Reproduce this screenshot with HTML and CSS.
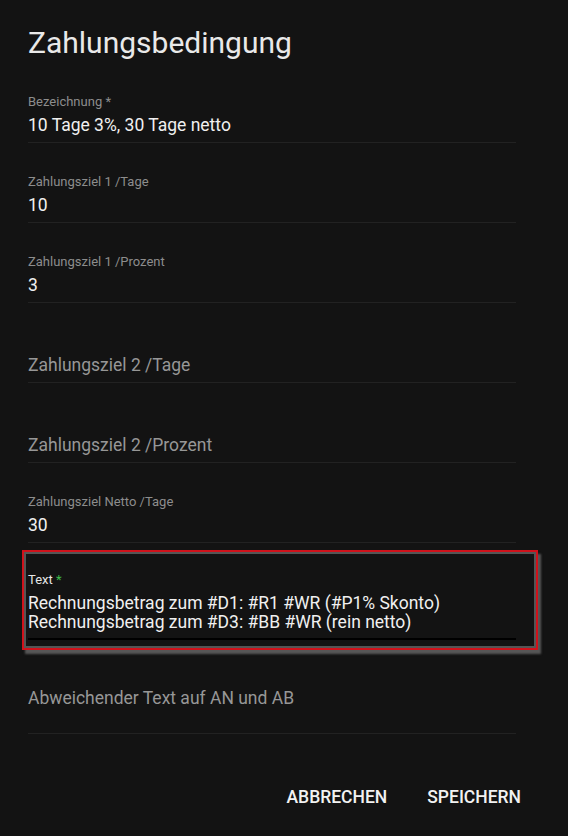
FILE: index.html
```html
<!DOCTYPE html>
<html lang="de">

<head>
    <title>Zahlungsbedingung</title>
    <meta name="viewport" content="width=device-width, initial-scale=1" />
    <meta charset="utf-8" />
    <link rel="stylesheet" href="styles.css">
</head>

<body>
    <div class="dialog">
        <h2 class="dialog-title">Zahlungsbedingung</h2>

        <form class="dialog-content">
            <div class="field">
                <label class="field-label">Bezeichnung *</label>
                <div class="field-input">10 Tage 3%, 30 Tage netto</div>
            </div>
            <div class="field">
                <label class="field-label">Zahlungsziel 1 /Tage</label>
                <div class="field-input">10</div>
            </div>
            <div class="field">
                <label class="field-label">Zahlungsziel 1 /Prozent</label>
                <div class="field-input">3</div>
            </div>
            <div class="field">
                <label class="field-label"></label>
                <div class="field-input placeholder">Zahlungsziel 2 /Tage</div>
            </div>
            <div class="field">
                <label class="field-label"></label>
                <div class="field-input placeholder">Zahlungsziel 2 /Prozent</div>
            </div>
            <div class="field">
                <label class="field-label">Zahlungsziel Netto /Tage</label>
                <div class="field-input">30</div>
            </div>
            <div class="field field-hover marked">
                <label class="field-label label-active">Text <span class="required">*</span></label>
                <div class="field-input multiline">Rechnungsbetrag zum #D1: #R1 #WR (#P1% Skonto)<br />Rechnungsbetrag zum #D3: #BB #WR (rein netto)</div>
            </div>
            <div class="field field-last">
                <label class="field-label"></label>
                <div class="field-input placeholder multiline rows-2">Abweichender Text auf AN und AB</div>
            </div>
        </form>

        <div class="dialog-actions">
            <button class="btn" type="button">Abbrechen</button>
            <button class="btn" type="button">Speichern</button>
        </div>
    </div>
</body>

</html>
```

FILE: styles.css
```css
html,
body {
    margin: 0;
    padding: 0;
    background: #131313;
}

body {
    font-family: Roboto, "Helvetica Neue", Arial, sans-serif;
    color: #ececec;
    width: 568px;
    height: 836px;
    overflow: hidden;
}

.dialog {
    padding: 26px 31px 0 28px;
}

.dialog-title {
    margin: 0;
    font-size: 30px;
    line-height: 34px;
    font-weight: 400;
    color: #e9e9e9;
}

.dialog-content {
    display: flex;
    flex-direction: column;
    gap: 31px;
    margin-top: 34px;
    margin-right: 21px;
}

.field {
    position: relative;
    border-bottom: 1px solid #222;
}

.field-label {
    display: block;
    height: 16px;
    font-size: 13px;
    line-height: 16px;
    color: #8d8d8d;
}

.label-active {
    color: #e6e6e6;
}

.required {
    color: #3dbb4a;
}

.field-input {
    font-size: 17.5px;
    line-height: 19px;
    padding: 6px 0 7px;
    color: #f0f0f0;
    white-space: nowrap;
}

.multiline {
    line-height: 19px;
}

.rows-2 {
    min-height: 37px;
}

.placeholder {
    color: #979797;
}

.field-hover {
    margin-top: -2px;
    border-bottom: 2px solid #000;
}

.field-hover .field-input {
    padding-bottom: 6px;
}

.field-last {
    margin-top: -4px;
}

/* rote Markierung um das Textfeld */
.marked::after {
    content: "";
    position: absolute;
    top: -22px;
    left: -6px;
    right: -22px;
    bottom: -12px;
    border: 2px solid #d0121b;
    box-shadow: inset 0 0 0 2px #555, 3px 4px 2px rgba(110, 110, 110, 0.75);
    pointer-events: none;
}

.dialog-actions {
    display: flex;
    justify-content: flex-end;
    gap: 8px;
    margin-top: 45px;
}

.btn {
    background: none;
    border: 0;
    padding: 6px 16px;
    font-family: inherit;
    font-size: 17.5px;
    font-weight: 500;
    line-height: 24px;
    text-transform: uppercase;
    color: #f2f2f2;
}
```
